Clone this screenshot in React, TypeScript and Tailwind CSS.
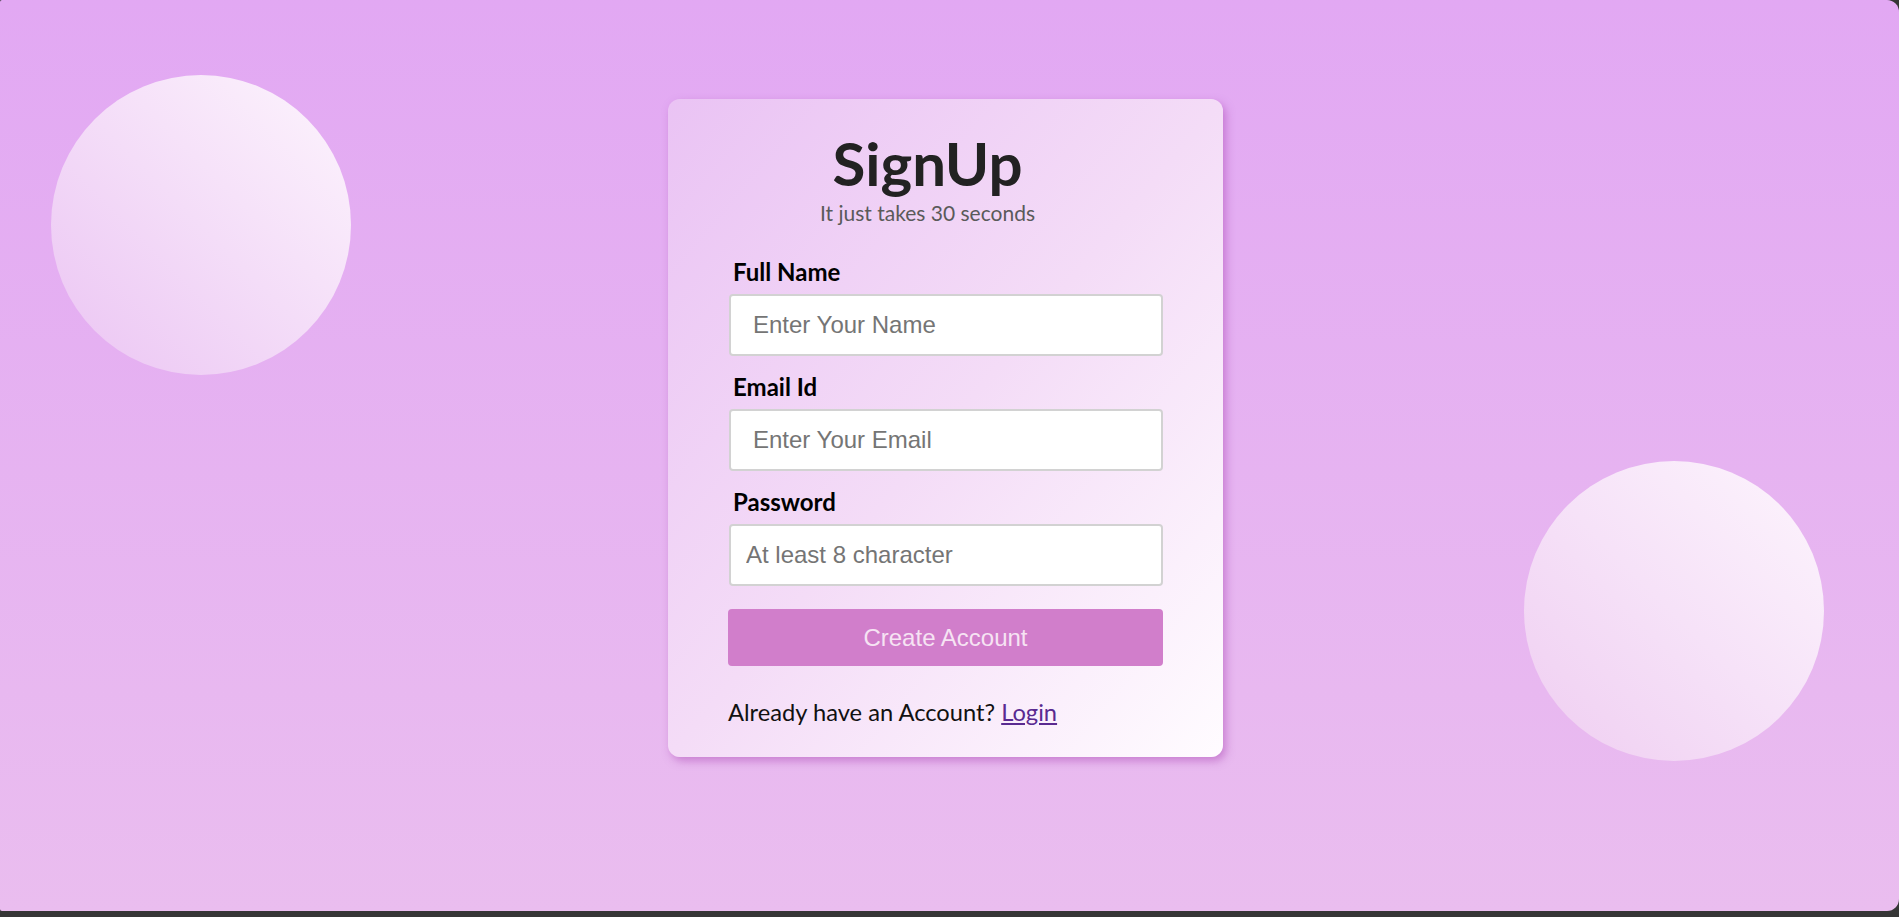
import { useState } from "react"

const Field = ({
  label,
  type,
  placeholder,
  value,
  onChange,
  indent,
}: {
  label: string;
  type: string;
  placeholder: string;
  value: string;
  onChange: (v: string) => void;
  indent: string;
}) => {
  return (
    <div className="flex flex-col">
      <label className="pl-[4px] text-[24px] leading-[25px] font-bold text-black">{label}</label>
      <input
        type={type}
        placeholder={placeholder}
        value={value}
        onChange={(e) => onChange(e.target.value)}
        className={`mt-[10px] h-[62px] w-full rounded-[4px] border-2 border-[#d2d2d2] bg-white ${indent} font-['Liberation_Sans',Arial,sans-serif] text-[24px] text-[#333] outline-none placeholder:text-[#757575]`}
      />
    </div>
  )
}

export default function App() {
  const [name, setName] = useState("")
  const [email, setEmail] = useState("")
  const [password, setPassword] = useState("")

  return (
    <div className="h-[917px] w-full bg-[#363636]">
      <div className="relative h-[911px] w-full overflow-hidden rounded-l-[2px] rounded-r-[12px] bg-linear-to-b from-[#e2a8f3] to-[#eabdef] font-['Lato','Noto_Sans',sans-serif]">
        {/* floating circles */}
        <div className="absolute left-[51px] top-[75px] h-[300px] w-[300px] rounded-full bg-linear-to-bl from-[#fdf5fd] via-[#f4ddf8] to-[#ebc4f3]" />
        <div className="absolute left-[1524px] top-[461px] h-[300px] w-[300px] rounded-full bg-linear-to-bl from-[#fdf5fd] via-[#f6e2f8] to-[#efcdf1]" />

        <div className="relative flex justify-center pr-[8px] pt-[99px]">
          <div className="w-[555px] rounded-xl bg-linear-to-br from-[#eac3f4] via-[#f4dcf7] to-[#fffcff] px-[60px] pb-[30px] pt-[31px] shadow-[3px_4px_8px_rgba(170,70,180,0.5)]">
            <div className="flex flex-col items-center pr-[37px] pl-[1px]">
              <h1 className="text-[60px] leading-[67px] font-bold text-[#222]">SignUp</h1>
              <p className="mt-[4px] text-[21px] leading-[24px] text-[#5a5a5a]">It just takes 30 seconds</p>
            </div>

            <form className="mt-[34px] flex flex-col gap-[18px] pl-[1px]" onSubmit={(e) => e.preventDefault()}>
              <Field label="Full Name" type="text" placeholder="Enter Your Name" value={name} onChange={setName} indent="pl-[22px]" />
              <Field label="Email Id" type="email" placeholder="Enter Your Email" value={email} onChange={setEmail} indent="pl-[22px]" />
              <Field label="Password" type="password" placeholder="At least 8 character" value={password} onChange={setPassword} indent="pl-[15px]" />
            </form>

            <button className="mt-[23px] h-[57px] w-full rounded-[4px] bg-[#d17ecb] font-['Liberation_Sans',Arial,sans-serif] text-[24px] text-[#f6e3f3]">
              Create Account
            </button>

            <div className="mt-[32px] text-[23.7px] leading-[29px] text-[#111]">
              Already have an Account?{" "}
              <a href="#" className="text-[#5a2a91] underline">Login</a>
            </div>
          </div>
        </div>
      </div>
    </div>
  )
}
